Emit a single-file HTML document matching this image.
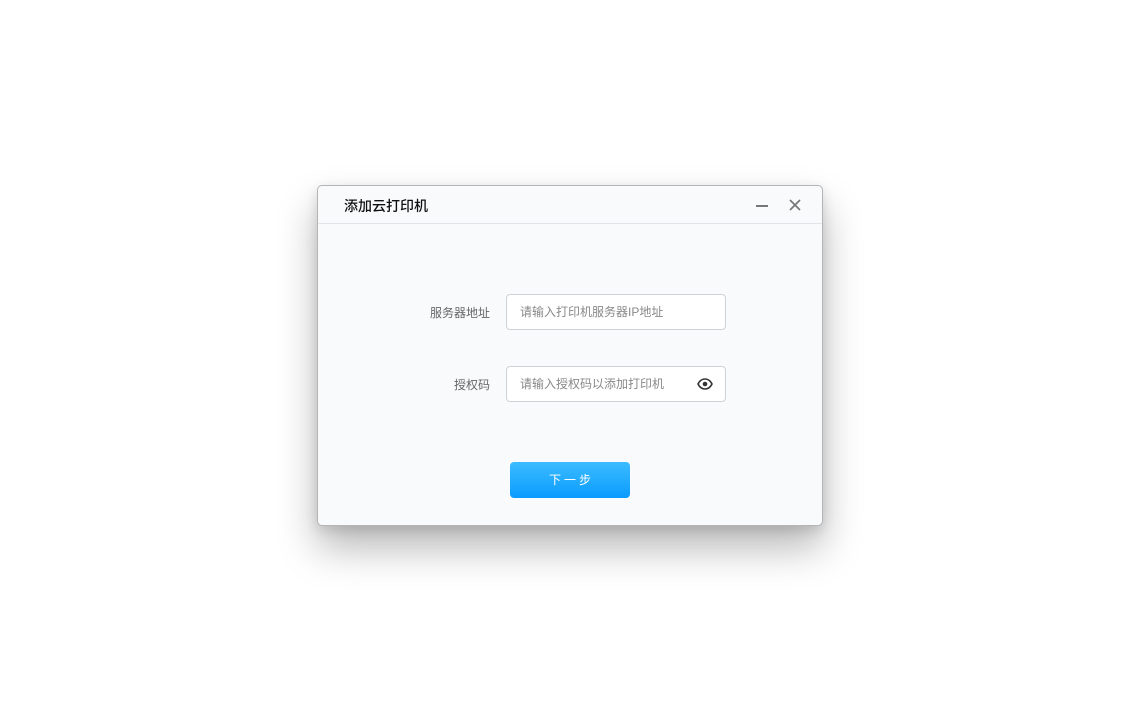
<!DOCTYPE html>
<html><head><meta charset="utf-8"><style>
*{box-sizing:border-box;margin:0;padding:0}
body{width:1140px;height:712px;background:#fff;position:relative;overflow:hidden;font-family:"Liberation Sans","Noto Sans CJK SC",sans-serif}
.dlg{position:absolute;left:317px;top:185px;width:506px;height:341px;background:#f9fafc;border:1px solid #b5b5b5;border-radius:5px;box-shadow:0 22px 40px rgba(0,0,0,0.28),0 4px 12px rgba(0,0,0,0.12)}
.hd{height:38px;border-bottom:1px solid #e2e4e8;position:relative}
.title{position:absolute;left:26px;top:10px;font-size:14px;color:#111;font-weight:500}
.min{position:absolute;left:438px;top:19px;width:12px;height:2px;background:#777}
.x{position:absolute;left:471px;top:13px}
.lbl{position:absolute;font-size:12px;color:#666;text-align:right;width:100px}
.inp{position:absolute;left:188px;width:220px;height:36px;border:1px solid #cfd2d6;border-radius:4px;background:#fff;font-size:12px;color:#888;padding-left:13px;line-height:34px}
.btn{position:absolute;left:192px;top:276px;width:120px;height:36px;border-radius:4px;background:linear-gradient(#3cbcff,#0a9bff);color:#fff;font-size:12px;text-align:center;line-height:36px;letter-spacing:3px;padding-left:3px}
</style></head><body>
<div class="dlg">
<div class="hd"><div class="title">添加云打印机</div><div class="min"></div>
<svg class="x" width="12" height="12" viewBox="0 0 12 12"><path d="M1 1L11 11M11 1L1 11" stroke="#777" stroke-width="1.7"/></svg></div>
<div class="lbl" style="left:72px;top:118px">服务器地址</div>
<div class="inp" style="top:108px">请输入打印机服务器IP地址</div>
<div class="lbl" style="left:72px;top:190px">授权码</div>
<div class="inp" style="top:180px">请输入授权码以添加打印机
<svg style="position:absolute;left:190px;top:11px" width="16" height="12" viewBox="0 0 16 12"><path d="M1 6C3 2 6 1 8 1s5 1 7 5c-2 4-5 5-7 5S3 10 1 6z" fill="none" stroke="#333" stroke-width="1.6"/><circle cx="8" cy="6" r="2.3" fill="#333"/></svg></div>
<div class="btn">下一步</div>
</div>
</body></html>
